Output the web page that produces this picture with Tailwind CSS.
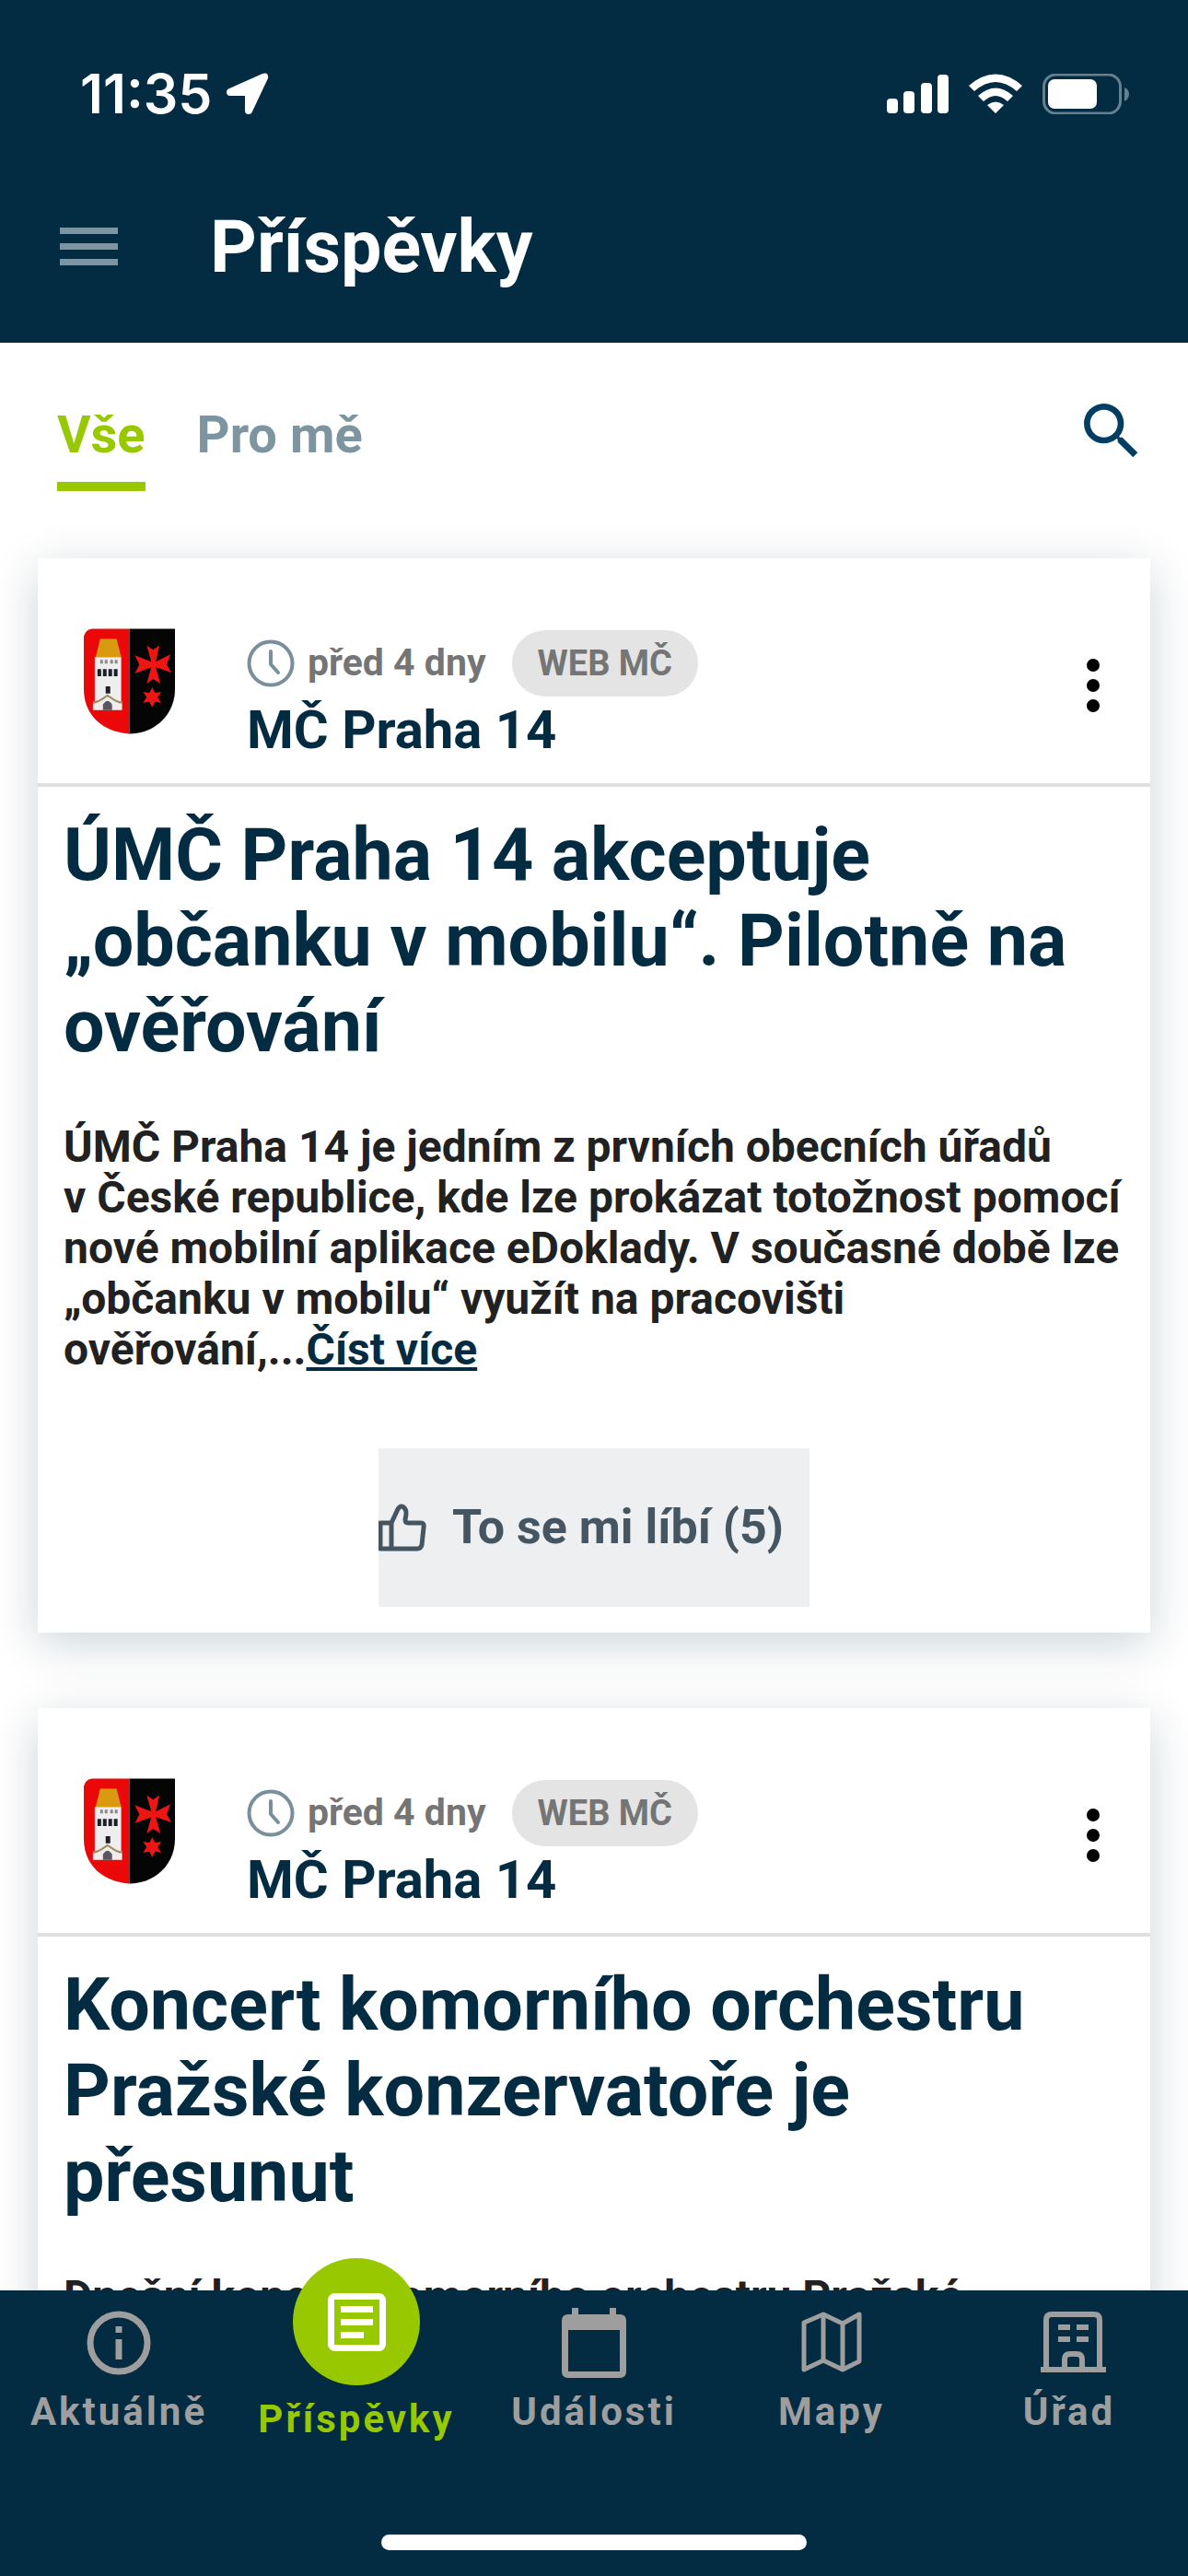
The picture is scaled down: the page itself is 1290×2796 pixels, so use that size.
<!DOCTYPE html>
<html lang="cs">
<head>
<meta charset="utf-8">
<meta name="viewport" content="width=device-width, initial-scale=1">
<title>Příspěvky</title>
<script src="https://cdn.jsdelivr.net/npm/@tailwindcss/browser@4"></script>
</head>
<body class="flex h-screen flex-col overflow-hidden bg-white font-['Roboto',sans-serif] font-bold text-[#032b41]">

<svg class="hidden" aria-hidden="true">
  <symbol id="crest" viewBox="0 0 100 116">
    <path d="M0 8Q2 1 9 0H50V115C20 113 0 94 0 66Z" fill="#ea0808"/>
    <path d="M50 0H100V66C100 94 78 115 50 115Z" fill="#050505"/>
    <path d="M18 11H36L41 31H13Z" fill="#d99a10"/>
    <path d="M12 31H41V80H42V89H10V80H12Z" fill="#eee"/>
    <path d="M18 34h3v4h-3zM23 34h3v4h-3zM29 34h3v4h-3zM34 34h3v4h-3z" fill="#8a8a8a"/>
    <path d="M15 44h4v8h-4zM21 44h4v8h-4zM27 44h4v8h-4zM33 44h4v8h-4zM24 63h5v8h-5z" fill="#1b1f2c"/>
    <path d="M10 81C18 80 21 76 26 73C31 76 34 80 42 81" fill="none" stroke="#a08c5c" stroke-width="2"/>
    <path d="M21 89V83Q26 75 31 83V89Z" fill="#5a5560"/>
    <path d="M69 18L76 23L83 18L79 36L95 28L91 39L96 48L79 42L84 60L76 55L69 60L74 42L56 49L61 39L56 29L74 36Z" fill="#ee1515"/>
    <path d="M75 64L78 70L85 69L81 75L85 81L78 80L75 86L72 80L65 81L69 75L65 69L72 70Z" fill="#ee1515"/>
  </symbol>
  <symbol id="clock" viewBox="0 0 52 52">
    <g fill="none" stroke="#78909c" stroke-width="4" stroke-linecap="round" stroke-linejoin="round"><circle cx="26" cy="26" r="23.500"/><path d="M26 13V27L34 36"/></g>
  </symbol>
</svg>

<header class="shrink-0 bg-[#032b41] text-white">
  <div class="flex h-[204px] items-center justify-between pl-[87px] pr-16">
    <div class="flex items-center gap-4">
      <span class="font-['Inter',sans-serif] text-[59px] font-semibold leading-[60px]">11:35</span>
      <svg class="h-[46px] w-[46px]" viewBox="0 0 46 46" fill="#fff"><path d="M39 1Q46 -1 45 6L28 42Q27 45 24 45Q20 45 20 41V25H4Q0 25 0 21Q0 18 3 17Z"/></svg>
    </div>
    <div class="flex items-center gap-[22px]">
      <svg class="h-11 w-[67px]" viewBox="0 0 67 44" fill="#fff"><rect y="27" width="12" height="16" rx="4"/><rect x="18" y="19" width="12" height="24" rx="4"/><rect x="37" y="10" width="12" height="33" rx="4"/><rect x="55" y="1" width="12" height="42" rx="4"/></svg>
      <svg class="h-11 w-[58px]" viewBox="0 0 58 44" fill="#fff"><path d="M29 43L20 34Q29 27 38 34ZM16 30L10 24Q29 7 48 24L42 30Q29 18 16 30ZM6 19L0 13Q29 -12 58 13L52 19Q29 -1 6 19Z"/></svg>
      <svg class="h-11 w-[94px]" viewBox="0 0 94 44"><rect x="1.500" y="1" width="83" height="42" rx="13" fill="none" stroke="#668090" stroke-width="3"/><rect x="6" y="6" width="53" height="32" rx="7" fill="#fff"/><path d="M89 15Q94 17 94 22T89 30Z" fill="#668090"/></svg>
    </div>
  </div>
  <div class="flex h-[168px] items-center gap-[100px] px-[65px] pb-[40px]">
    <button type="button" aria-label="Menu"><svg class="h-[42px] w-[63px]" viewBox="0 0 63 42" fill="#7d95a1"><path d="M0 0H63V7H0ZM0 17H63V24H0ZM0 34H63V41H0Z"/></svg></button>
    <h1 class="text-[79px] leading-[96px]">Příspěvky</h1>
  </div>
</header>

<main class="min-h-0 flex-1 overflow-hidden">
  <div class="flex h-[234px] items-start justify-between pl-[62px] pr-[43px] pt-14">
    <nav class="flex gap-14 pt-1 text-[56px] leading-[80px]">
      <a href="#" class="h-[101px] border-b-10 border-[#97c800] text-[#97c800]">Vše</a>
      <a href="#" class="text-[#7d95a1]">Pro mě</a>
    </nav>
    <button type="button" aria-label="Hledat"><svg class="h-20 w-20" viewBox="0 0 24 24" fill="#003f63"><path d="M15.500 14h-.79l-.28-.27A6.470 6.470 0 0 0 16 9.500 6.500 6.500 0 1 0 9.500 16c1.610 0 3.090-.59 4.230-1.570l.27.28v.79l5 4.990L20.490 19l-4.990-5zm-6 0C7.010 14 5 11.990 5 9.500S7.010 5 9.500 5 14 7.010 14 9.500 11.990 14 9.500 14z"/></svg></button>
  </div>

  <div class="flex flex-col gap-[82px] px-[41px]">
    <article class="bg-white shadow-[0_12px_48px_rgba(3,43,65,0.2)]">
      <div class="flex h-[248px] items-start border-b-4 border-[#e0e0e0] pl-[50px] pr-[54px] pt-[76px]">
        <svg class="h-[116px] w-[99px]" aria-label="Znak MČ Praha 14"><use href="#crest"/></svg>
        <div class="ml-[78px] flex-1">
          <div class="flex h-[76px] items-center text-[41px] text-[#757575]">
            <svg class="mr-[14px] h-[52px] w-[52px]"><use href="#clock"/></svg>
            <span>před 4 dny</span>
            <span class="ml-7 rounded-full bg-[#e4e4e4] px-7 text-[38px] leading-[72px]">WEB MČ</span>
          </div>
          <div class="text-[58px] leading-[68px]">MČ Praha 14</div>
        </div>
        <button type="button" aria-label="Další možnosti" class="mt-8"><svg class="h-[60px] w-4" viewBox="0 0 16 60"><circle cx="8" cy="8" r="7"/><circle cx="8" cy="30" r="7"/><circle cx="8" cy="52" r="7"/></svg></button>
      </div>
      <div class="px-7 pb-7 pt-7">
        <h2 class="text-[79px] leading-[93px]">ÚMČ Praha 14 akceptuje „občanku v mobilu“. Pilotně na ověřování</h2>
        <p class="mt-14 text-[48px] leading-[55px] text-[#212121]">ÚMČ Praha 14 je jedním z prvních obecních úřadů v&nbsp;České republice, kde lze prokázat totožnost pomocí nové mobilní aplikace eDoklady. V současné době lze „občanku v mobilu“ využít na pracovišti ověřování,...<a href="#" class="text-[#032b41] underline">Číst více</a></p>
        <button type="button" class="mx-auto mt-20 flex h-[172px] items-center gap-7 bg-[#edeff1] pr-7 text-[52px] text-[#455561]">
          <svg class="h-[52px] w-[52px]" viewBox="0 0 52 52" fill="none" stroke="#455561" stroke-width="5" stroke-linejoin="round"><path d="M2 21H14V49H2ZM14 21L21 6Q25 0 29 6Q31 9 29 17Q29 21 32 21H46Q50 21 49 26L47 45Q46 49 42 49H14"/></svg>
          To se mi líbí (5)
        </button>
      </div>
    </article>

    <article class="bg-white shadow-[0_12px_48px_rgba(3,43,65,0.2)]">
      <div class="flex h-[248px] items-start border-b-4 border-[#e0e0e0] pl-[50px] pr-[54px] pt-[76px]">
        <svg class="h-[116px] w-[99px]" aria-label="Znak MČ Praha 14"><use href="#crest"/></svg>
        <div class="ml-[78px] flex-1">
          <div class="flex h-[76px] items-center text-[41px] text-[#757575]">
            <svg class="mr-[14px] h-[52px] w-[52px]"><use href="#clock"/></svg>
            <span>před 4 dny</span>
            <span class="ml-7 rounded-full bg-[#e4e4e4] px-7 text-[38px] leading-[72px]">WEB MČ</span>
          </div>
          <div class="text-[58px] leading-[68px]">MČ Praha 14</div>
        </div>
        <button type="button" aria-label="Další možnosti" class="mt-8"><svg class="h-[60px] w-4" viewBox="0 0 16 60"><circle cx="8" cy="8" r="7"/><circle cx="8" cy="30" r="7"/><circle cx="8" cy="52" r="7"/></svg></button>
      </div>
      <div class="px-7 pb-7 pt-7">
        <h2 class="text-[79px] leading-[93px]">Koncert komorního orchestru Pražské konzervatoře je přesunut</h2>
        <p class="mt-14 text-[48px] leading-[55px] text-[#212121]">Dnešní koncert komorního orchestru Pražské</p>
      </div>
    </article>
  </div>
</main>

<footer class="relative z-10 shrink-0 bg-[#032b41]">
  <nav class="grid h-[259px] grid-cols-5 text-center text-[42px] leading-[48px] tracking-[3px] text-[#9e9e9e]">
    <a href="#" class="flex flex-col items-center pt-[22px]"><svg class="h-[70px] w-[70px]" viewBox="0 0 70 70" fill="none" stroke="currentColor" stroke-width="7"><circle cx="35" cy="35" r="31"/><path d="M35 31V53M35 17V24"/></svg><span class="mt-4">Aktuálně</span></a>
    <a href="#" class="-mt-[35px] flex flex-col items-center text-[#97c800]"><span class="flex h-[138px] w-[138px] items-center justify-center rounded-full bg-[#97c800]"><svg class="h-[63px] w-[63px]" viewBox="0 0 63 63"><rect x="3.500" y="3.500" width="56" height="56" rx="4" fill="none" stroke="#fff" stroke-width="7"/><path d="M14 14H49V21H14ZM14 28H49V35H14ZM14 42H39V49H14Z" fill="#fff"/></svg></span><span class="mt-[13px]">Příspěvky</span></a>
    <a href="#" class="flex flex-col items-center pt-[18px]"><svg class="h-[78px] w-[70px]" viewBox="0 0 70 78" fill="currentColor"><path d="M11 1H18V8H52V1H59V8H63Q70 8 70 15V70Q70 77 63 77H7Q0 77 0 70V15Q0 8 7 8H11ZM7 25V70H63V25Z" fill-rule="evenodd"/></svg><span class="mt-3">Události</span></a>
    <a href="#" class="flex flex-col items-center pt-[22px]"><svg class="h-[70px] w-[66px]" viewBox="0 -1 66 70" fill="none" stroke="currentColor" stroke-width="5" stroke-linejoin="round"><path d="M3 12L24 3L45 13L63 3V54L45 63L24 53L3 63ZM24 3V53M45 13V63"/></svg><span class="mt-4">Mapy</span></a>
    <a href="#" class="flex flex-col items-center pt-[22px]"><svg class="h-[70px] w-[79px]" viewBox="-8 0 79 70" fill="none" stroke="currentColor" stroke-width="6"><path d="M6 62V10Q6 4 12 4H58Q64 4 64 10V62M0 64H71M26 62V53Q26 47 32 47H39Q45 47 45 53V62M19 18H32M39 18H52M19 31H32M39 31H52"/></svg><span class="mt-4">Úřad</span></a>
  </nav>
  <div class="flex h-[51px] justify-center pt-[6px]"><div class="h-[17px] w-[462px] rounded-full bg-white"></div></div>
</footer>
</body>
</html>
